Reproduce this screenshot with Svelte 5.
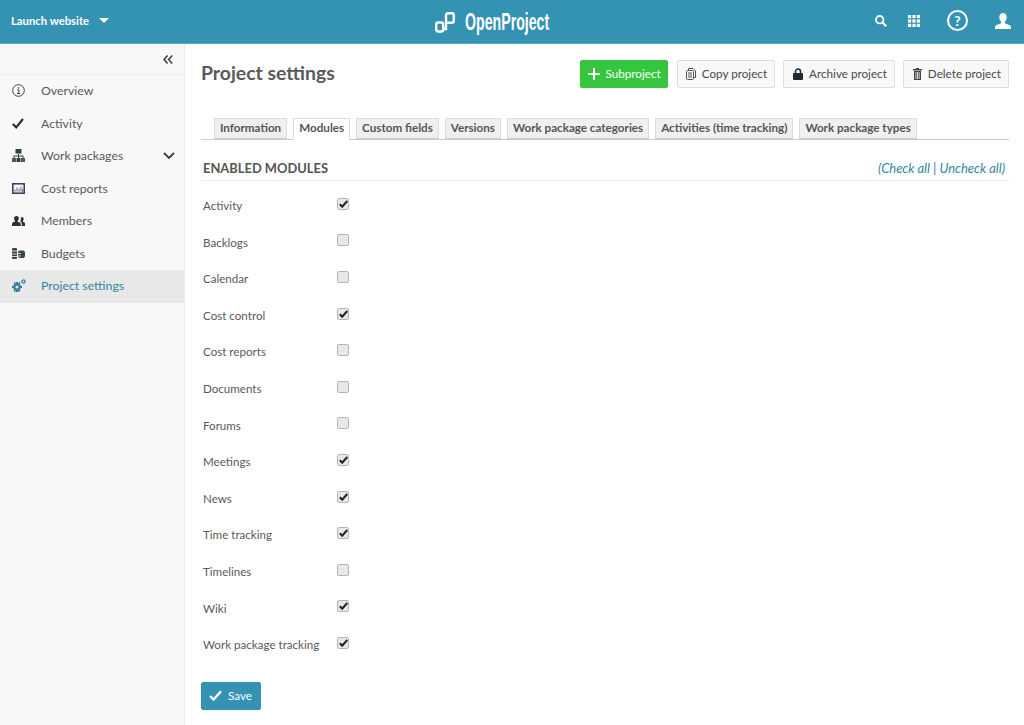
<script>
  const menu = [
    { label: 'Overview', icon: 'info' },
    { label: 'Activity', icon: 'check' },
    { label: 'Work packages', icon: 'tree', arrow: true },
    { label: 'Cost reports', icon: 'chart' },
    { label: 'Members', icon: 'group' },
    { label: 'Budgets', icon: 'budget' },
    { label: 'Project settings', icon: 'gears', active: true }
  ];

  const tabs = [
    'Information',
    'Modules',
    'Custom fields',
    'Versions',
    'Work package categories',
    'Activities (time tracking)',
    'Work package types'
  ];

  const modules = [
    { name: 'Activity', on: true },
    { name: 'Backlogs', on: false },
    { name: 'Calendar', on: false },
    { name: 'Cost control', on: true },
    { name: 'Cost reports', on: false },
    { name: 'Documents', on: false },
    { name: 'Forums', on: false },
    { name: 'Meetings', on: true },
    { name: 'News', on: true },
    { name: 'Time tracking', on: true },
    { name: 'Timelines', on: false },
    { name: 'Wiki', on: true },
    { name: 'Work package tracking', on: true }
  ];
</script>

<header class="topbar">
  <div class="project-pick">
    <span>Launch website</span>
    <svg width="10" height="5" viewBox="0 0 10 5"><path d="M0 0h10L5 5z" fill="#fff" /></svg>
  </div>
  <div class="logo">
    <svg width="20" height="21" viewBox="0 0 20 21" fill="none" stroke="#fff" stroke-width="2.400">
      <rect x="1.200" y="10.500" width="7" height="9" rx="2" />
      <path d="M8.200 17h2.800V3.200a2 2 0 0 1 2-2h3.800a2 2 0 0 1 2 2v5.600a2 2 0 0 1-2 2H11" />
    </svg>
    <span class="logo-text">OpenProject</span>
  </div>
  <div class="top-icons">
    <svg class="i-search" width="12" height="12" viewBox="0 0 12 12" fill="none" stroke="#fff">
      <circle cx="4.700" cy="4.700" r="3.700" stroke-width="1.800" />
      <path d="M7.500 7.500l3.800 3.800" stroke-width="2.200" />
    </svg>
    <svg class="i-grid" width="12" height="12" viewBox="0 0 12 12" fill="#fff">
      <rect x="0" y="0" width="3.200" height="3.200" /><rect x="4.400" y="0" width="3.200" height="3.200" /><rect x="8.800" y="0" width="3.200" height="3.200" />
      <rect x="0" y="4.400" width="3.200" height="3.200" /><rect x="4.400" y="4.400" width="3.200" height="3.200" /><rect x="8.800" y="4.400" width="3.200" height="3.200" />
      <rect x="0" y="8.800" width="3.200" height="3.200" /><rect x="4.400" y="8.800" width="3.200" height="3.200" /><rect x="8.800" y="8.800" width="3.200" height="3.200" />
    </svg>
    <span class="i-help">?</span>
    <svg class="i-user" width="16" height="16" viewBox="0 0 16 16" fill="#fff">
      <path d="M8 0c2.300 0 3.700 1.700 3.700 4.200 0 1.700-.7 3.300-1.700 4.300v1.300c0 .8 1 1 3 1.800 1.800.7 3 1.300 3 2.400v2H0v-2c0-1.100 1.200-1.700 3-2.400 2-.8 3-1 3-1.800V8.500C5 7.500 4.300 5.900 4.300 4.200 4.300 1.700 5.700 0 8 0z" />
    </svg>
  </div>
</header>

<div class="body">
  <aside class="sidebar">
    <div class="collapse">
      <svg width="10" height="9" viewBox="0 0 10 9" fill="none" stroke="#333f48" stroke-width="1.500">
        <path d="M4.600 .5L1 4.500l3.600 4M9.200 .5L5.600 4.500l3.600 4" />
      </svg>
    </div>
    <nav>
      {#each menu as item}
        <div class="menu-item" class:active={item.active}>
          <span class="menu-icon">
            {#if item.icon === 'info'}
              <svg width="13" height="13" viewBox="0 0 13 13" fill="none" stroke="#444">
                <circle cx="6.500" cy="6.500" r="5.800" />
                <path d="M5.300 5.700h1.500v3.600M5.200 9.500h3" />
                <path d="M6 3.200h1.200v1.200H6z" fill="#444" stroke="none" />
              </svg>
            {:else if item.icon === 'check'}
              <svg width="12" height="11" viewBox="0 0 12 11" fill="none" stroke="#2a3138" stroke-width="2.200">
                <path d="M.8 6l3.400 3.400L11 1" />
              </svg>
            {:else if item.icon === 'tree'}
              <svg width="13" height="13" viewBox="0 0 13 13" fill="#333f48">
                <rect x="3.500" y="0" width="6" height="4.500" />
                <rect x="0" y="9" width="4" height="4" fill="#555" />
                <rect x="4.500" y="9" width="4" height="4" />
                <rect x="9" y="9" width="4" height="4" fill="#555" />
                <path d="M6 4.500h1v2h4.500V9h-1V7.500H7V9H6V7.500H2.500V9h-1V6.500H6z" />
              </svg>
            {:else if item.icon === 'chart'}
              <svg width="13" height="11" viewBox="0 0 13 11" fill="none">
                <rect x=".8" y=".8" width="11.400" height="9.400" stroke="#2f3a52" stroke-width="1.500" />
                <path d="M3 8.800V6.500M5 8.800V4.500M7 8.800V5.500M9 8.800V3.500M10.500 8.800V6" stroke="#7b6a8c" />
              </svg>
            {:else if item.icon === 'group'}
              <svg width="13" height="10" viewBox="0 0 13 10" fill="#2a3138">
                <path d="M4.500 0C6 0 6.800 1 6.800 2.500c0 1-.4 1.800-1 2.400v.8c1.500.5 3 1 3 2.300V10H0V7.900c0-1.300 1.500-1.800 3-2.300v-.7c-.6-.6-1-1.400-1-2.400C2 1 3 0 4.500 0z" />
                <path d="M9.800 1c1.200 0 1.900.8 1.900 2.100 0 .8-.3 1.500-.8 2v.6c1 .4 2.100.8 2.100 1.900V10H9.800V7.700c0-.9-.6-1.500-1.400-2 .3-.5.400-1.300.400-2.200C8.800 2.500 8.900 1.500 9.800 1z" />
              </svg>
            {:else if item.icon === 'budget'}
              <svg width="13" height="11" viewBox="0 0 13 11" fill="#3a444c">
                <rect x="0" y="0" width="5" height="11" rx="1" />
                <path d="M0 3h5M0 6h5M0 8.500h5" stroke="#f8f8f8" stroke-width=".8" />
                <rect x="6" y="2.500" width="7" height="7.500" rx="2" />
                <path d="M6 5.500h3M6 8h3" stroke="#f8f8f8" stroke-width=".8" />
              </svg>
            {:else}
              <svg width="14" height="13" viewBox="0 0 14 13" fill="#2f7f9c">
                <circle cx="5" cy="8" r="2.700" fill="none" stroke="#2f7f9c" stroke-width="2.200" />
                <path d="M4 3h2v2H4zM4 11h2v2H4zM0 7h2v2H0zM8 7h2v2H8zM1.500 3.800l1.400-.8 1 1.500-1.400.8zM8.500 3.800l-1.400-.8-1 1.500 1.400.8zM1.500 12.200l1.400.8 1-1.500-1.400-.8zM8.500 12.200l-1.400.8-1-1.500 1.400-.8z" />
                <circle cx="11.500" cy="2.500" r="1.600" fill="none" stroke="#2f7f9c" stroke-width="1.300" />
              </svg>
            {/if}
          </span>
          <span class="menu-label">{item.label}</span>
          {#if item.arrow}
            <svg class="menu-arrow" width="12" height="8" viewBox="0 0 12 8" fill="none" stroke="#333f48" stroke-width="1.800">
              <path d="M1 1l5 5 5-5" />
            </svg>
          {/if}
        </div>
      {/each}
    </nav>
  </aside>

  <main class="content">
    <div class="title-row">
      <h1>Project settings</h1>
      <div class="toolbar">
        <button class="btn green">
          <svg width="12" height="12" viewBox="0 0 12 12" fill="#fff"><path d="M5 0h2v5h5v2H7v5H5V7H0V5h5z" /></svg>
          Subproject
        </button>
        <button class="btn copy">
          <svg width="10" height="12" viewBox="0 0 10 12" fill="none" stroke="#555">
            <path d="M2.500 2.500V.5h4.500l2.500 2.500v6.500H7.500" />
            <rect x=".5" y="2.500" width="7" height="9" rx="1" />
            <path d="M2 5h4M2 7h4M2 9h4" />
          </svg>
          Copy project
        </button>
        <button class="btn">
          <svg width="10" height="12" viewBox="0 0 10 12">
            <path d="M2.500 5.500V3.500a2.500 2.500 0 0 1 5 0v2" fill="none" stroke="#1f2a33" stroke-width="1.500" />
            <rect x="0" y="5" width="10" height="7" rx="1" fill="#1f2a33" />
          </svg>
          Archive project
        </button>
        <button class="btn">
          <svg width="9" height="12" viewBox="0 0 9 12" fill="#444">
            <rect x="0" y="1" width="9" height="1.500" />
            <rect x="3" y="0" width="3" height="1" />
            <path d="M1 3h7v9H1zM2.500 4v7h.8V4zM4.100 4v7h.8V4zM5.700 4v7h.8V4z" fill-rule="evenodd" />
          </svg>
          Delete project
        </button>
      </div>
    </div>

    <div class="tabs">
      {#each tabs as tab}
        <span class="tab" class:selected={tab === 'Modules'}>{tab}</span>
      {/each}
    </div>

    <div class="section-head">
      <h3>ENABLED MODULES</h3>
      <em class="check-links">(<span class="link">Check all</span> | <span class="link">Uncheck all</span>)</em>
    </div>

    <div class="modules">
      {#each modules as mod}
        <div class="module">
          <span class="module-name">{mod.name}</span>
          <span class="box">
            {#if mod.on}
              <svg width="9" height="8" viewBox="0 0 9 8" fill="none" stroke="#222" stroke-width="2.100">
                <path d="M.8 4.300l2.400 2.400L8.300 1" />
              </svg>
            {/if}
          </span>
        </div>
      {/each}
    </div>

    <button class="btn save">
      <svg width="13" height="11" viewBox="0 0 13 11" fill="none" stroke="#fff" stroke-width="2.400">
        <path d="M1 6l3.600 3.500L12 1.200" />
      </svg>
      Save
    </button>
  </main>
</div>

<style>
  :global(body) {
    font-family: Lato, "Open Sans", sans-serif;
    color: #555;
    background: #fff;
    overflow: hidden;
  }

  .topbar {
    height: 43px;
    box-sizing: content-box;
    background: #3493b3;
    border-bottom: 1px solid #5aa9c4;
    display: flex;
    align-items: center;
    justify-content: space-between;
    position: relative;
    color: #fff;
  }

  .project-pick {
    display: flex;
    align-items: center;
    gap: 10px;
    padding-left: 11px;
    margin-bottom: 3px;
    font-size: 11.300px;
    font-weight: 700;
  }

  .project-pick svg {
    margin-top: 1px;
  }

  .logo {
    display: flex;
    align-items: center;
    gap: 10px;
    position: absolute;
    left: 435px;
    top: 11px;
  }

  .logo-text {
    font-family: "Liberation Sans", sans-serif;
    font-size: 24px;
    line-height: 22px;
    display: inline-block;
    transform: scaleX(0.59);
    transform-origin: left center;
    font-weight: 700;
    white-space: nowrap;
    width: 84px;
  }

  .top-icons {
    display: flex;
    align-items: center;
    padding-right: 13px;
    margin-bottom: 2px;
  }

  .i-search {
    margin-right: 21px;
  }

  .i-grid {
    margin-right: 27px;
  }

  .i-help {
    width: 17px;
    height: 17px;
    border: 2px solid #fff;
    border-radius: 50%;
    font-size: 14px;
    font-weight: 700;
    line-height: 17px;
    text-align: center;
    margin-right: 27px;
  }

  .body {
    display: flex;
    height: 681px;
  }

  .sidebar {
    width: 184px;
    flex: none;
    background: #f8f8f8;
    border-right: 1px solid #eaeaea;
  }

  .collapse {
    height: 30px;
    border-bottom: 1px solid #eee;
    display: flex;
    align-items: center;
    justify-content: flex-end;
    padding-right: 11px;
  }

  .menu-item {
    height: 32.500px;
    box-sizing: border-box;
    padding-bottom: 1px;
    display: flex;
    align-items: center;
    font-size: 12.300px;
    color: #5a5a5a;
  }

  .menu-item.active {
    background: #e8e8e8;
    color: #2f86a5;
  }

  .menu-icon {
    width: 41px;
    padding-left: 12px;
    box-sizing: border-box;
    display: flex;
    align-items: center;
    flex: none;
  }

  .menu-arrow {
    margin-left: auto;
    margin-right: 9px;
  }

  .content {
    flex: 1;
    padding: 16px 15px 0 16px;
    min-width: 0;
  }

  .title-row {
    display: flex;
    justify-content: space-between;
    align-items: center;
    height: 28px;
  }

  h1 {
    margin: 0 0 4px;
    font-size: 19.400px;
    font-weight: 700;
    color: #5a5a5a;
  }

  .toolbar {
    display: flex;
    gap: 8px;
  }

  .btn {
    height: 28px;
    box-sizing: border-box;
    display: inline-flex;
    align-items: center;
    gap: 6px;
    padding: 0 7px 2px 9px;
    font-family: inherit;
    font-size: 11.700px;
    color: #4a4a4a;
    background: #f8f8f8;
    border: 1px solid #ddd;
    border-radius: 2px;
  }

  .btn svg {
    margin-top: 2px;
  }

  .btn.copy {
    padding-left: 8px;
  }

  .btn.green {
    background: #35c53f;
    border-color: #35c53f;
    color: #fff;
    gap: 5px;
    padding: 0 6px 2px 7px;
    margin-right: 1px;
  }

  .tabs {
    display: flex;
    gap: 6px;
    margin-top: 30px;
    padding-left: 13px;
    border-bottom: 1px solid #ccc;
    height: 21px;
  }

  .tab {
    height: 21px;
    box-sizing: border-box;
    padding: 0 5px;
    font-size: 11.650px;
    font-weight: 700;
    line-height: 17px;
    color: #555;
    background: #f0f0f0;
    border: 1px solid #ddd;
    border-bottom: 1px solid #ccc;
    white-space: nowrap;
  }

  .tab.selected {
    background: #fff;
    border-bottom-color: #fff;
    height: 22px;
  }

  .section-head {
    display: flex;
    justify-content: space-between;
    align-items: center;
    height: 40px;
    border-bottom: 1px solid #eee;
    padding: 0 4px 0 2px;
  }

  h3 {
    margin: 16px 0 0;
    font-size: 12.900px;
    font-weight: 700;
    color: #555;
  }

  .check-links {
    margin-top: 16px;
    font-size: 13px;
    color: #2f86a5;
  }

  .check-links .link {
    color: #2f86a5;
  }

  .modules {
    margin-top: 6px;
  }

  .module {
    height: 36.600px;
    display: flex;
    align-items: center;
    padding-left: 2px;
    font-size: 11.600px;
    color: #5a5a5a;
  }

  .module-name {
    width: 134px;
    flex: none;
    padding-top: 0.4px;
  }

  .box {
    width: 12px;
    height: 12px;
    box-sizing: border-box;
    margin-top: -3px;
    background: #e8e8e8;
    border: 1px solid #b5b5b5;
    border-radius: 2px;
    display: flex;
    align-items: center;
    justify-content: center;
  }

  .btn.save {
    margin-top: 19px;
    width: 60px;
    background: #3493b3;
    border-color: #3493b3;
    color: #fff;
    padding: 0 0 2px 7px;
    gap: 6px;
  }
</style>
